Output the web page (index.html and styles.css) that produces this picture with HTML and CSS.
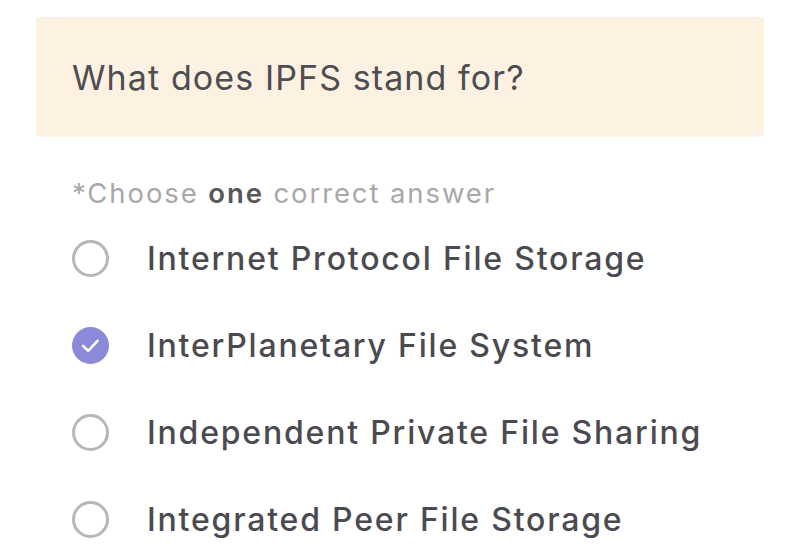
FILE: index.html
```html
<!DOCTYPE html>
<html>
<head>
<meta charset="utf-8">
<link rel="stylesheet" href="styles.css">
</head>
<body>
<div class="quiz">
  <div class="question">What does IPFS stand for?</div>
  <div class="body">
    <div class="hint">*Choose <b>one</b> correct answer</div>
    <ul class="options">
      <li class="option"><span class="radio"></span><span class="label">Internet Protocol File Storage</span></li>
      <li class="option checked"><span class="radio"><svg viewBox="0 0 37 37" width="37" height="37"><path d="M11 19 L16.2 23.8 L25.5 13.8" fill="none" stroke="#fff" stroke-width="2.6" stroke-linecap="round" stroke-linejoin="round"/></svg></span><span class="label">InterPlanetary File System</span></li>
      <li class="option"><span class="radio"></span><span class="label">Independent Private File Sharing</span></li>
      <li class="option"><span class="radio"></span><span class="label">Integrated Peer File Storage</span></li>
    </ul>
  </div>
</div>
</body>
</html>
```
FILE: styles.css
```css
html, body {
  margin: 0;
  padding: 0;
  background: #ffffff;
}
body {
  font-family: Inter, "Noto Sans", sans-serif;
  color: #4a4a50;
}
.quiz {
  padding: 17px 36px 0 36px;
}
.question {
  background: #fdf2e1;
  border-radius: 4px;
  height: 120px;
  box-sizing: border-box;
  padding: 0 36px;
  display: flex;
  align-items: center;
  font-size: 34px;
  letter-spacing: 1.1px;
  font-weight: 400;
  color: #4d4d52;
}
.body {
  padding: 38px 36px 0 36px;
}
.hint {
  font-size: 27.5px;
  letter-spacing: 1.9px;
  color: #a8a8a8;
  line-height: 36px;
}
.hint b {
  font-weight: 600;
  color: #58585c;
}
.options {
  list-style: none;
  margin: 29px 0 0 0;
  padding: 0;
  display: flex;
  flex-direction: column;
  gap: 50px;
}
.option {
  display: flex;
  align-items: center;
  height: 37px;
  gap: 38px;
}
.radio {
  width: 37px;
  height: 37px;
  box-sizing: border-box;
  border: 3px solid #b7b7b7;
  border-radius: 50%;
  flex: none;
  display: flex;
  align-items: center;
  justify-content: center;
}
.option.checked .radio {
  border: none;
  background: #8a8ad8;
}
.label {
  font-size: 32px;
  letter-spacing: 1.8px;
  font-weight: 500;
  color: #4a4a50;
}
```
